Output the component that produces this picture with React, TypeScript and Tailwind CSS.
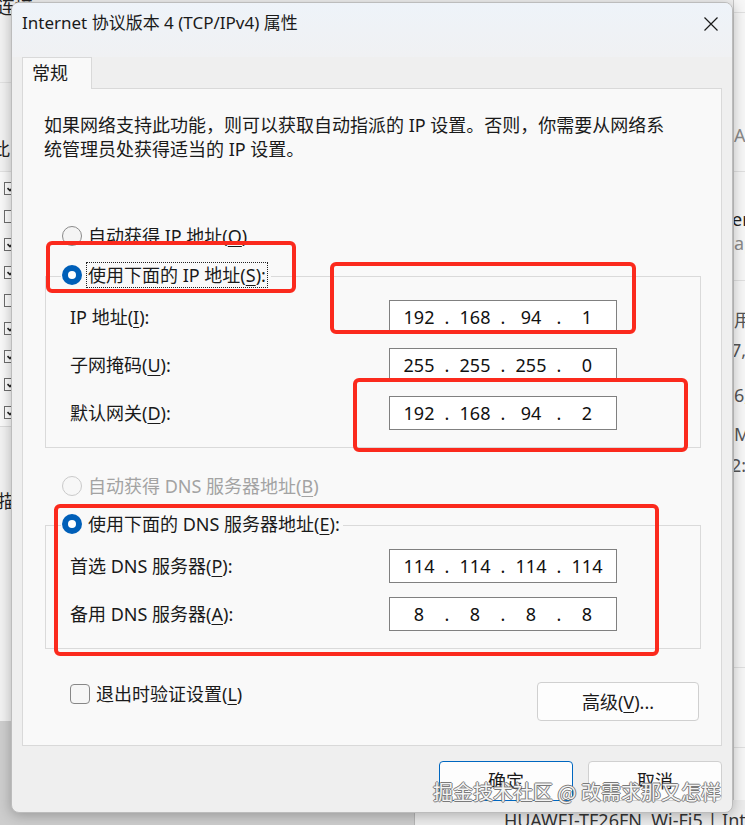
import React from "react";

const UI = "font-['Noto_Sans','Noto_Sans_CJK_SC',sans-serif]";

function Radio({
  checked,
  disabled,
  focus,
  children,
}: {
  checked?: boolean;
  disabled?: boolean;
  focus?: boolean;
  children: React.ReactNode;
}) {
  return (
    <div className="flex items-center h-[24px] bg-[#f9f9f9] pl-[1px] pr-[3px]">
      {checked ? (
        <span className="w-[20px] h-[20px] rounded-full bg-[#005fb8] flex items-center justify-center shrink-0">
          <span className="w-[8px] h-[8px] rounded-full bg-white" />
        </span>
      ) : (
        <span
          className={`w-[20px] h-[20px] rounded-full border shrink-0 ${
            disabled ? "border-[#cacaca] bg-[#f7f7f7]" : "border-[#8a8a8a] bg-[#f4f4f4]"
          }`}
        />
      )}
      {focus ? (
        <span className="ml-[4px] h-[26px] flex items-center border border-dotted border-[#222] px-[1px] text-[18px] leading-[24px] text-[#1a1a1a] whitespace-nowrap">
          {children}
        </span>
      ) : (
        <span
          className={`ml-[6px] text-[18px] leading-[24px] whitespace-nowrap ${
            disabled ? "text-[#a3a3a3]" : "text-[#1a1a1a]"
          }`}
        >
          {children}
        </span>
      )}
    </div>
  );
}

function IpField({ parts }: { parts: string[] }) {
  return (
    <div className="w-[228px] h-[34px] border border-[#808080] bg-white flex items-center pl-[4px] text-[18px] leading-[24px] text-[#111] font-['Noto_Sans',sans-serif]">
      {parts.map((p, i) => (
        <React.Fragment key={i}>
          <span className="w-[50px] text-center">{p}</span>
          {i < 3 && <span className="w-[6px] text-center">.</span>}
        </React.Fragment>
      ))}
    </div>
  );
}

function FieldRow({ label, parts }: { label: React.ReactNode; parts: string[] }) {
  return (
    <div className="flex items-center">
      <span className="w-[343px] pl-[24px] text-[18px] leading-[24px] text-[#1a1a1a] whitespace-nowrap">
        {label}
      </span>
      <IpField parts={parts} />
    </div>
  );
}

function BgCheck({ checked }: { checked: boolean }) {
  return (
    <div className="h-[28px] flex items-center pl-[4px]">
      <span className="w-[13px] h-[13px] border border-[#6d6d6d] bg-white flex items-center justify-center">
        {checked && (
          <svg width="10" height="10" viewBox="0 0 10 10">
            <path d="M1.5 5.2 L4 7.6 L8.6 2.4" fill="none" stroke="#222" strokeWidth="1.6" />
          </svg>
        )}
      </span>
    </div>
  );
}

function U({ children }: { children: React.ReactNode }) {
  return <span className="underline underline-offset-[3px] decoration-[1px]">{children}</span>;
}

export default function App() {
  return (
    <div className={`relative w-[745px] h-[825px] overflow-hidden bg-[#f3f3f3] ${UI}`}>
      {/* background application */}
      <div className="flex flex-col w-full h-full">
        <div className="flex flex-1">
          {/* left column */}
          <div className="w-[40px] shrink-0 flex flex-col bg-[#f3f3f3]">
            <div className="h-[83px] border-b border-[#e2e2e2] overflow-hidden">
              <div className="-mt-[5px] -ml-[3px] text-[18px] leading-[24px] text-[#222] whitespace-nowrap">连接</div>
            </div>
            <div className="h-[89px] border-b border-[#e2e2e2] flex flex-col justify-end pb-[10px] overflow-hidden">
              <div className="-ml-[8px] text-[18px] leading-[24px] text-[#222]">此</div>
            </div>
            <div className="pt-[2px] bg-[#fafafa]">
              <BgCheck checked />
              <BgCheck checked={false} />
              <BgCheck checked />
              <BgCheck checked />
              <BgCheck checked={false} />
              <BgCheck checked />
              <BgCheck checked />
              <BgCheck checked />
              <BgCheck checked />
            </div>
            <div className="h-[295px] border-t border-[#dcdcdc] pt-[62px] overflow-hidden">
              <div className="-ml-[2px] text-[18px] leading-[24px] text-[#222]">描</div>
            </div>
            <div className="flex-1 bg-[#cfcfcf]" />
          </div>
          <div className="flex-1" />
          {/* right column */}
          <div className="w-[12px] shrink-0 flex flex-col border-l border-[#c9c9c9] bg-[#f7f7f7] overflow-hidden text-[18px] leading-[24px] whitespace-nowrap">
            <div className="h-[13px] border-b border-[#e0e0e0] shrink-0" />
            <div className="h-[110px] shrink-0" />
            <div className="h-[24px] text-[#8a8a8a] shrink-0">Ar</div>
            <div className="h-[25px] border-b border-[#e0e0e0] shrink-0" />
            <div className="h-[35px] shrink-0" />
            <div className="h-[24px] text-[#222] -ml-[2px] shrink-0">er</div>
            <div className="h-[24px] text-[#8a8a8a] shrink-0">ap</div>
            <div className="h-[26px] border-b border-[#e0e0e0] shrink-0" />
            <div className="h-[27px] shrink-0" />
            <div className="h-[24px] text-[#555] shrink-0">用</div>
            <div className="h-[6px] shrink-0" />
            <div className="h-[24px] text-[#555] -ml-[3px] shrink-0">7,(</div>
            <div className="h-[21px] shrink-0" />
            <div className="h-[24px] text-[#555] shrink-0">6,</div>
            <div className="h-[15px] shrink-0" />
            <div className="h-[24px] text-[#555] shrink-0">M</div>
            <div className="h-[7px] shrink-0" />
            <div className="h-[24px] text-[#555] -ml-[3px] shrink-0">2:</div>
            <div className="h-[191px] border-b border-[#e0e0e0] shrink-0" />
            <div className="h-[80px] border-b border-[#e0e0e0] shrink-0" />
            <div className="flex-1" />
          </div>
        </div>
        <div className="h-[25px] shrink-0 flex">
          <div className="w-[415px] shrink-0 bg-[#cdcdcd] border-r border-[#b5b5b5]" />
          <div className="flex-1 min-w-0 overflow-hidden bg-[#ececec] pl-[89px] pt-[8px] text-[18px] leading-[24px] text-[#333] whitespace-nowrap">
            HUAWEI-TF26FN&nbsp; Wi-Fi5 | Intel
          </div>
        </div>
      </div>

      {/* dialog window */}
      <div className="absolute left-[11px] top-[2px] w-[722px] h-[811px] rounded-[8px] border border-[#bcbcbc] bg-[#efefef] shadow-[0_2px_14px_rgba(0,0,0,0.28)] overflow-hidden flex flex-col">
        {/* title bar */}
        <div className="h-[54px] shrink-0 bg-gradient-to-b from-[#eef3f9] to-[#f0f1f3] flex items-start pt-[8px] pl-[10px] pr-[13px]">
          <span className="text-[17px] leading-[24px] text-[#1a1a1a] whitespace-nowrap">
            Internet 协议版本 4 (TCP/IPv4) 属性
          </span>
          <span className="ml-auto h-[26px] flex items-center">
            <svg width="16" height="16" viewBox="0 0 16 16">
              <path d="M1.5 1.5 L14.5 14.5 M14.5 1.5 L1.5 14.5" stroke="#1a1a1a" strokeWidth="1.2" fill="none" />
            </svg>
          </span>
        </div>

        {/* tab strip */}
        <div className="pl-[10px] flex shrink-0">
          <div className="relative z-10 w-[70px] h-[32px] -mb-px border border-b-0 border-[#d9d9d9] bg-[#f9f9f9] pl-[9px] pt-[3px] text-[18px] leading-[24px] text-[#1a1a1a]">
            常规
          </div>
        </div>

        {/* tab panel */}
        <div className="ml-[10px] w-[700px] h-[658px] shrink-0 border border-[#d9d9d9] bg-[#f9f9f9] flex flex-col">
          <p className="mt-[24px] pl-[21px] text-[18px] leading-[24px] text-[#1a1a1a] whitespace-nowrap">
            如果网络支持此功能，则可以获取自动指派的 IP 设置。否则，你需要从网络系
            <br />
            统管理员处获得适当的 IP 设置。
          </p>

          <div className="mt-[63px] ml-[38px] flex">
            <Radio>
              自动获得 IP 地址(<U>O</U>)
            </Radio>
          </div>

          {/* group 1 */}
          <div className="mt-[28px] ml-[22px] mr-[20px] border border-[#dadada] pb-[17px] flex flex-col">
            <div className="-mt-[14px] ml-[15px] flex">
              <Radio checked focus>
                使用下面的 IP 地址(<U>S</U>):
              </Radio>
            </div>
            <div className="mt-[13px] flex flex-col gap-[14px]">
              <FieldRow label={<>IP 地址(<U>I</U>):</>} parts={["192", "168", "94", "1"]} />
              <FieldRow label={<>子网掩码(<U>U</U>):</>} parts={["255", "255", "255", "0"]} />
              <FieldRow label={<>默认网关(<U>D</U>):</>} parts={["192", "168", "94", "2"]} />
            </div>
          </div>

          <div className="mt-[26px] ml-[38px] flex">
            <Radio disabled>
              自动获得 DNS 服务器地址(<U>B</U>)
            </Radio>
          </div>

          {/* group 2 */}
          <div className="mt-[27px] ml-[22px] mr-[20px] border border-[#dadada] pb-[17px] flex flex-col">
            <div className="-mt-[14px] ml-[15px] flex">
              <Radio checked>
                使用下面的 DNS 服务器地址(<U>E</U>):
              </Radio>
            </div>
            <div className="mt-[13px] flex flex-col gap-[14px]">
              <FieldRow label={<>首选 DNS 服务器(<U>P</U>):</>} parts={["114", "114", "114", "114"]} />
              <FieldRow label={<>备用 DNS 服务器(<U>A</U>):</>} parts={["8", "8", "8", "8"]} />
            </div>
          </div>

          <div className="mt-[33px] ml-[47px] mr-[22px] flex items-start">
            <div className="flex items-center h-[24px]">
              <span className="w-[20px] h-[20px] rounded-[4px] border border-[#878787] bg-[#f6f6f6]" />
              <span className="ml-[6px] text-[18px] leading-[24px] text-[#1a1a1a] whitespace-nowrap">
                退出时验证设置(<U>L</U>)
              </span>
            </div>
            <button className="ml-auto w-[162px] h-[39px] rounded-[4px] border border-[#d0d0d0] bg-[#fdfdfd] text-[18px] leading-[24px] text-[#1a1a1a]">
              高级(<U>V</U>)...
            </button>
          </div>
        </div>

        {/* bottom buttons */}
        <div className="mt-[15px] mr-[10px] flex justify-end gap-[15px] shrink-0">
          <button className="w-[134px] h-[40px] rounded-[4px] border border-[#0067c0] bg-[#fdfdfd] text-[18px] leading-[24px] text-[#1a1a1a]">
            确定
          </button>
          <button className="w-[134px] h-[40px] rounded-[4px] border border-[#d0d0d0] bg-[#fdfdfd] text-[18px] leading-[24px] text-[#1a1a1a]">
            取消
          </button>
        </div>
      </div>

      {/* annotation boxes */}
      <div className="absolute left-[46px] top-[241px] w-[250px] h-[52px] border-[4px] border-[#fb2a1d] rounded-[6px]" />
      <div className="absolute left-[330px] top-[262px] w-[306px] h-[72px] border-[4px] border-[#fb2a1d] rounded-[6px]" />
      <div className="absolute left-[353px] top-[378px] w-[335px] h-[74px] border-[4px] border-[#fb2a1d] rounded-[6px]" />
      <div className="absolute left-[54px] top-[504px] w-[605px] h-[152px] border-[4px] border-[#fb2a1d] rounded-[6px]" />

      {/* watermark */}
      <div className="absolute left-[433px] top-[778px] text-[20px] leading-[28px] text-[#f4f4f4] whitespace-nowrap font-['Noto_Sans_CJK_SC',sans-serif] [text-shadow:1px_0_#7a7a7a,-1px_0_#7a7a7a,0_1px_#7a7a7a,0_-1px_#7a7a7a]">
        掘金技术社区 @ 改需求那又怎样
      </div>
    </div>
  );
}
